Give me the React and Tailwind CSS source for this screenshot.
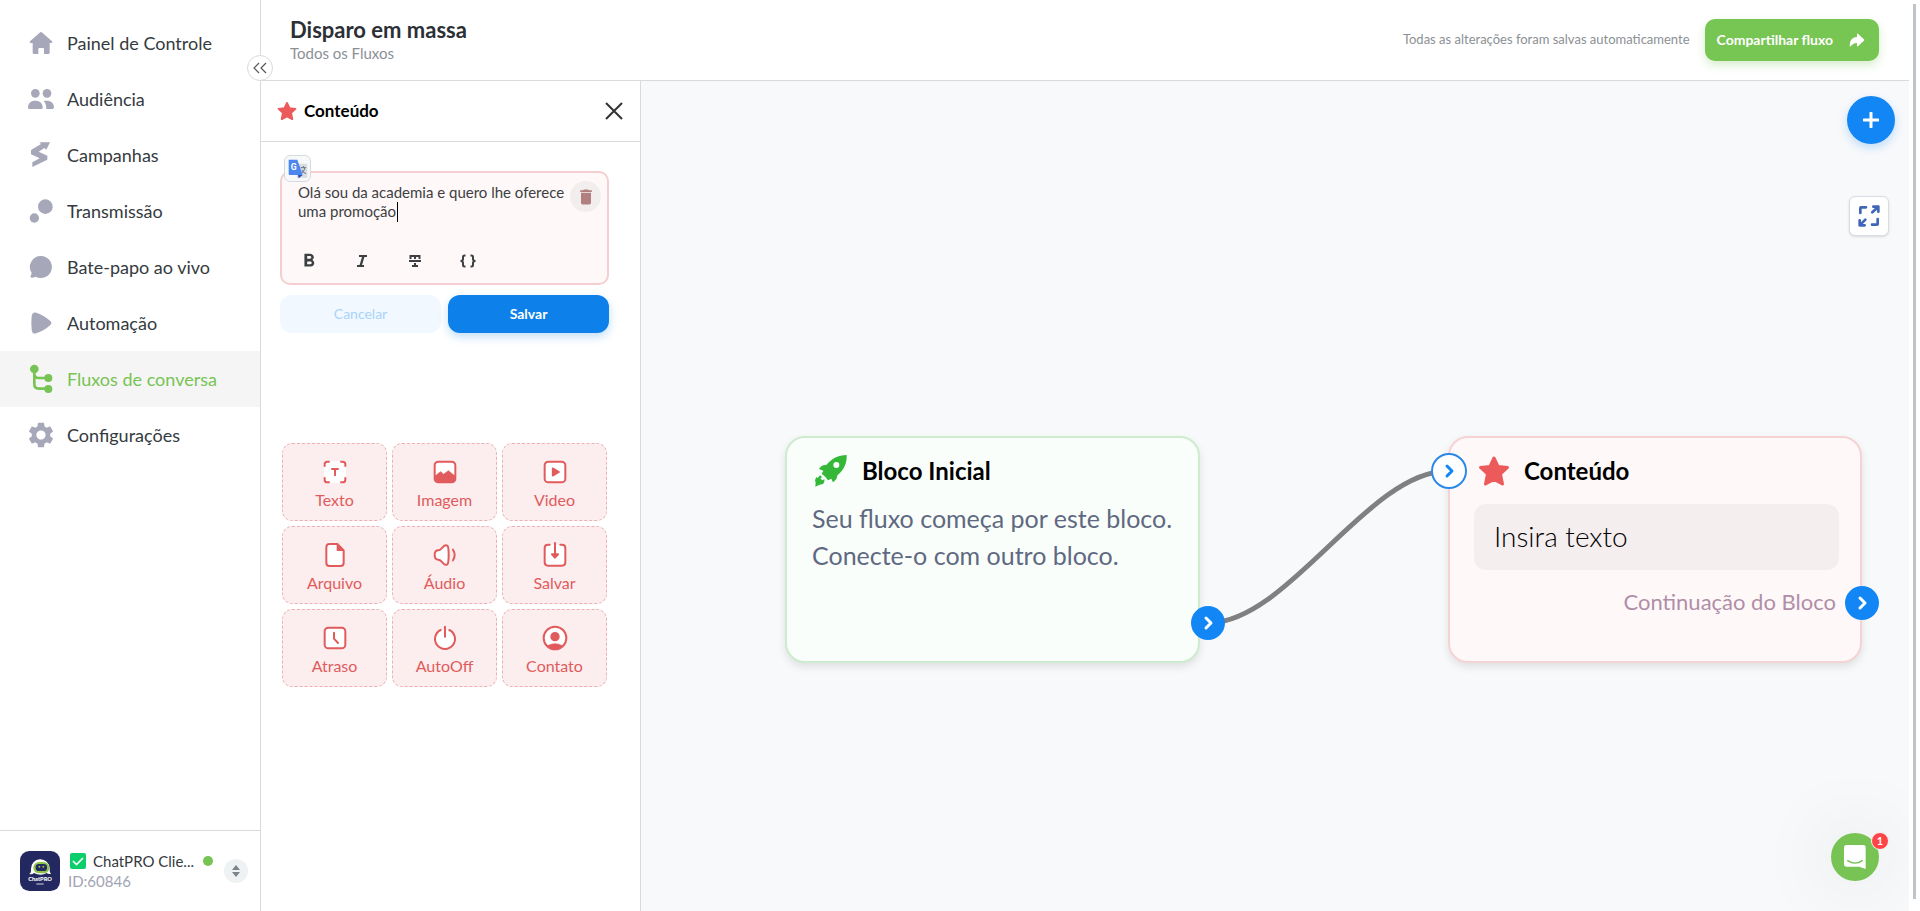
/**
 * Flow builder screen: side navigation, content editor panel and block canvas.
 */

import React, { useState } from 'react';
import { MdDelete, MdFormatBold, MdSettings } from 'react-icons/md';
import { IoArrowRedo } from 'react-icons/io5';

const NAV_ITEMS = [
    {
        label: 'Painel de Controle',
        icon: (
            <path d="M42 9Q44 9 46 11L75 37Q78 42 73 42H68V71Q68 75 64 75H51V60Q51 57 48 57H37Q34 57 34 60V75H21Q17 75 17 71V42H11Q6 42 9 37L38 11Q40 9 42 9Z" />
        ),
    },
    {
        label: 'Audiência',
        icon: (
            <>
                <circle cx="25" cy="25" r="13" />
                <circle cx="60" cy="25" r="13" />
                <path d="M3 68C3 54 12 47 25 47S47 54 47 68Q47 72 43 72H7Q3 72 3 68Z" />
                <path d="M50 48C68 44 81 52 81 67Q81 72 76 72H58Q58 56 50 48Z" />
            </>
        ),
    },
    { label: 'Campanhas', icon: <path d="M12 27L42 9L37 4H69L58 26L52 21L35 32L61 44V56L16 78V64L38 52L12 40Z" /> },
    {
        label: 'Transmissão',
        icon: (
            <>
                <circle cx="55" cy="29" r="22" />
                <circle cx="22" cy="63" r="14" />
            </>
        ),
    },
    {
        label: 'Bate-papo ao vivo',
        icon: <path d="M42 9A33 33 0 1 1 26 71Q20 74 13 74Q9 73 11 69L14 60A33 33 0 0 1 42 9Z" />,
    },
    {
        label: 'Automação',
        icon: <path d="M14 22Q16 7 28 11Q52 19 70 36Q76 42 70 48Q52 65 28 73Q16 77 14 62Q12 42 14 22Z" />,
    },
    {
        label: 'Fluxos de conversa',
        active: true,
        icon: (
            <>
                <circle cx="22" cy="12" r="13" />
                <circle cx="64" cy="39" r="12" />
                <circle cx="64" cy="72" r="12" />
                <path
                    d="M22 12V58Q22 71 35 71H62M22 26Q22 39 35 39H62"
                    fill="none"
                    stroke="currentColor"
                    strokeWidth="8"
                />
            </>
        ),
    },
    { label: 'Configurações', settings: true },
];

const Frame = () => <rect x="5" y="5" width="62" height="62" rx="11" fill="#fff" />;

const TILES = [
    {
        label: 'Texto',
        icon: (
            <>
                <rect x="4" y="4" width="64" height="64" rx="10" fill="#fff" stroke="none" />
                <path d="M5 18V13Q5 5 13 5H18M54 5H59Q67 5 67 13V18M67 54V59Q67 67 59 67H54M18 67H13Q5 67 5 59V54" />
                <path d="M27 27H45M36 27V46" />
            </>
        ),
    },
    {
        label: 'Imagem',
        icon: (
            <>
                <Frame />
                <path d="M6 48L23 35L32 43L46 32L66 48V58Q66 66 58 66H14Q6 66 6 58Z" fill="currentColor" strokeWidth="2" />
            </>
        ),
    },
    {
        label: 'Video',
        icon: (
            <>
                <Frame />
                <path d="M29 25L48 36L29 47Z" fill="currentColor" strokeWidth="5" />
            </>
        ),
    },
    {
        label: 'Arquivo',
        icon: (
            <>
                <path d="M20 3H43L62 22V59Q62 69 52 69H20Q10 69 10 59V13Q10 3 20 3Z" fill="#fff" />
                <path d="M43 4V22H61Z" fill="currentColor" strokeWidth="4" />
            </>
        ),
    },
    {
        label: 'Áudio',
        icon: (
            <>
                <path
                    d="M16 22Q21 22 26 16L33 9Q38 5 43 8Q47 11 47 36T43 64Q38 67 33 63L26 56Q21 50 16 50Q5 50 5 36T16 22Z"
                    fill="#fff"
                />
                <path d="M60 20Q70 36 60 52" />
            </>
        ),
    },
    {
        label: 'Salvar',
        icon: (
            <>
                <path d="M20 5H15Q5 5 5 15V58Q5 68 15 68H57Q67 68 67 58V15Q67 5 57 5H52" fill="#fff" />
                <path d="M36 0V40" />
                <path d="M27 34H45L36 44Z" fill="currentColor" />
            </>
        ),
    },
    {
        label: 'Atraso',
        icon: (
            <>
                <Frame />
                <path d="M33 20V38L45 51" />
            </>
        ),
    },
    {
        label: 'AutoOff',
        icon: (
            <>
                <path d="M23 12A30 30 0 1 0 49 12" fill="#fff" />
                <path d="M36 2V32" />
            </>
        ),
    },
    {
        label: 'Contato',
        icon: (
            <>
                <circle cx="36" cy="36" r="34" fill="#fff" />
                <circle cx="36" cy="32" r="11" fill="currentColor" />
                <path d="M14 59Q36 47 58 59Q36 80 14 59Z" fill="currentColor" strokeWidth="2" />
            </>
        ),
    },
];

const Star = ({ className }) => (
    <svg viewBox="0 0 32 32" className={className} fill="currentColor" stroke="currentColor" aria-hidden="true">
        <path
            d="M16 3L20 11.500L29.500 12.500L22.500 19L24.500 29L16 24.500L7.500 29L9.500 19L2.500 12.500L12 11.500Z"
            strokeWidth="3"
            strokeLinejoin="round"
        />
    </svg>
);

const Chevron = () => (
    <svg viewBox="0 0 16 16" className="size-4" fill="none" stroke="currentColor" strokeWidth="3" aria-hidden="true">
        <path d="M6 3L11 8L6 13" strokeLinecap="round" strokeLinejoin="round" />
    </svg>
);

const Rocket = () => (
    <svg viewBox="0 0 96 96" className="size-8" fill="#35b837" aria-hidden="true">
        <path
            fillRule="evenodd"
            d="M95 0C96 24 88 44 67 61C67 70 62 77 54 82L49 71L39 76C34 68 28 62 20 57L25 47L12 42C16 34 24 29 34 30C50 10 70 1 95 0ZM64 21A9 9 0 1 0 64 39A9 9 0 1 0 64 21Z"
        />
        <path d="M15 61L21 66L16 71L23 76L28 72Q30 82 24 87L14 89L1 95L2 83L0 76L4 66L8 69Z" />
    </svg>
);

const Sidebar = () => (
    <aside className="relative flex w-[261px] shrink-0 flex-col border-r border-[#d9dadd] bg-white">
        <nav className="flex-1 pt-[15px]">
            {NAV_ITEMS.map(({ label, icon, active, settings }) => (
                <a
                    key={label}
                    href="#"
                    className={`flex h-14 items-center gap-3 pl-[27px] text-lg ${
                        active ? 'bg-[#f5f5f5] text-[#77c353]' : 'text-[#343a40]'
                    }`}
                >
                    {settings ? (
                        <MdSettings className="size-7 scale-110 text-[#a6a8b9]" />
                    ) : (
                        <svg
                            viewBox="0 0 84 84"
                            className={`size-7 overflow-visible ${active ? '' : 'text-[#a6a8b9]'}`}
                            fill="currentColor"
                            aria-hidden="true"
                        >
                            {icon}
                        </svg>
                    )}
                    {label}
                </a>
            ))}
        </nav>

        <div className="flex h-[81px] items-center border-t border-[#d9dadd] pr-3 pl-5">
            <svg viewBox="0 0 120 120" className="size-10 shrink-0" aria-hidden="true">
                <rect width="120" height="120" rx="28" fill="#242861" />
                <path
                    d="M28 69Q34 66 33 54A28 28 0 0 1 89 52Q88 64 93 69Q84 70 80 66Q62 76 42 66Q36 71 28 69Z"
                    fill="#fff"
                />
                <rect x="40" y="33" width="48" height="34" rx="17" fill="#8cc34a" />
                <rect x="47" y="39" width="34" height="21" rx="10" fill="#242861" />
                <circle cx="58" cy="47" r="3" fill="#8cc34a" />
                <circle cx="70" cy="47" r="3" fill="#8cc34a" />
                <text x="60" y="91" fontSize="17" fontWeight="900" fontFamily="Lato, sans-serif" textAnchor="middle" fill="#fff">
                    ChatPRO
                </text>
                <rect x="49" y="97" width="22" height="4" fill="#a7a9c4" />
            </svg>
            <div className="ml-2 min-w-0 flex-1 text-[15px] leading-5">
                <div className="flex items-center text-[#343a40]">
                    <svg viewBox="0 0 16 16" className="mr-[7px] ml-[2px] size-4 shrink-0" aria-hidden="true">
                        <rect width="16" height="16" rx="2" fill="#0ccf6b" />
                        <path d="M3 8L6.500 11.500L13 5" fill="none" stroke="#fff" strokeWidth="1.600" />
                    </svg>
                    <span>ChatPRO Clie...</span>
                    <span className="ml-auto size-[10px] rounded-full bg-[#77c353]" />
                </div>
                <div className="text-[#a0a3b4]">ID:60846</div>
            </div>
            <button
                type="button"
                aria-label="Trocar conta"
                className="ml-[11px] flex size-6 items-center justify-center rounded-full bg-[#eff2f3] text-[#7c8389]"
            >
                <svg viewBox="0 0 10 12" className="h-3 w-[10px]" fill="currentColor" aria-hidden="true">
                    <path d="M5 0L9 5H1ZM5 12L1 7H9Z" />
                </svg>
            </button>
        </div>

        <button
            type="button"
            aria-label="Recolher menu"
            className="absolute top-[55px] -right-[13px] z-20 flex size-[26px] items-center justify-center rounded-full border border-[#d9dadd] bg-white text-[#555]"
        >
            <svg viewBox="0 0 14 12" className="h-3 w-[14px]" fill="none" stroke="currentColor" aria-hidden="true">
                <path d="M6 1L1 6L6 11M13 1L8 6L13 11" strokeWidth="1.200" />
            </svg>
        </button>
    </aside>
);

const Header = () => (
    <header className="flex h-[81px] shrink-0 items-center justify-between border-b border-[#d9dadd] bg-white pr-[30px] pl-[29px]">
        <div className="pt-[2px]">
            <h1 className="text-[22px] leading-6 font-bold text-[#2b3036]">Disparo em massa</h1>
            <p className="text-[15px] leading-[22px] text-[#8b9095]">Todos os Fluxos</p>
        </div>
        <div className="flex items-center gap-[15px]">
            <span className="text-[13px] text-[#8b9095]">Todas as alterações foram salvas automaticamente</span>
            <button
                type="button"
                className="flex h-[42px] items-center gap-[15px] rounded-[10px] bg-[#77c553] px-3 text-sm font-bold text-white shadow-[0_4px_10px_rgba(119,197,83,0.3)]"
            >
                Compartilhar fluxo
                <IoArrowRedo className="mr-[1px] size-[18px]" />
            </button>
        </div>
    </header>
);

const ContentPanel = () => {
    const [text, setText] = useState('Olá sou da academia e quero lhe oferece uma promoção');

    return (
        <section className="w-[380px] shrink-0 border-r border-[#d9dadd] bg-white">
            <div className="flex h-[61px] items-center border-b border-[#d9dadd] pr-[17px] pl-4">
                <Star className="size-5 text-[#ec5a5b]" />
                <h2 className="ml-[7px] flex-1 text-[17px] font-bold text-black">Conteúdo</h2>
                <button type="button" aria-label="Fechar" className="text-[#333]">
                    <svg viewBox="0 0 18 18" className="size-[18px]" fill="none" stroke="currentColor" aria-hidden="true">
                        <path d="M1 1L17 17M17 1L1 17" strokeWidth="2" />
                    </svg>
                </button>
            </div>

            <div className="pt-[29px] pr-[31px] pl-[19px]">
                <div className="relative rounded-[10px] border-2 border-[#f5cfcf] bg-[#fef9f8]">
                    <textarea
                        aria-label="Mensagem"
                        value={text}
                        onChange={(e) => setText(e.target.value)}
                        className="mt-[10px] ml-4 block h-[67px] w-[276px] resize-none overflow-hidden bg-transparent text-[15px] leading-[19px] text-[#3d4043] outline-none"
                    />
                    <span className="absolute top-[29px] left-[115px] h-5 w-px bg-black" />
                    <div className="flex h-[33px] gap-[31px] pl-4 text-[#3d4043]">
                        <button type="button" aria-label="Negrito" className="flex size-[22px] items-center justify-center">
                            <MdFormatBold className="size-6" />
                        </button>
                        <button type="button" aria-label="Itálico" className="flex size-[22px] items-center justify-center">
                            <svg viewBox="0 0 12 12" className="size-3" fill="none" stroke="currentColor" aria-hidden="true">
                                <path d="M3 1H11M1 11H8" strokeWidth="2" />
                                <path d="M7.500 1L4.500 11" strokeWidth="2.400" />
                            </svg>
                        </button>
                        <button type="button" aria-label="Tachado" className="flex size-[22px] items-center justify-center">
                            <svg viewBox="0 0 12 12" className="size-3" fill="none" stroke="currentColor" aria-hidden="true">
                                <path d="M1.500 4V1H10.500V4M6 1V4M6 8V11" strokeWidth="2" />
                                <path d="M0 6H12M3 11H9" strokeWidth="1.800" />
                            </svg>
                        </button>
                        <button type="button" aria-label="Variável" className="flex size-[22px] items-center justify-center">
                            <svg
                                viewBox="0 0 16 12"
                                className="h-3 w-4 overflow-visible"
                                fill="none"
                                stroke="currentColor"
                                aria-hidden="true"
                            >
                                <path
                                    d="M5.500 0.500H4.500Q3 0.500 3 2V4Q3 6 0.500 6Q3 6 3 8V10Q3 11.500 4.500 11.500H5.500M10.500 0.500H11.500Q13 0.500 13 2V4Q13 6 15.500 6Q13 6 13 8V10Q13 11.500 11.500 11.500H10.500"
                                    strokeWidth="2"
                                />
                            </svg>
                        </button>
                    </div>

                    <button
                        type="button"
                        aria-label="Excluir"
                        className="absolute top-2 right-[6px] flex size-[31px] items-center justify-center rounded-full bg-[#f3eeee] text-[#b27f80]"
                    >
                        <MdDelete className="size-5" />
                    </button>
                    <div className="absolute -top-[18px] left-[2px] flex size-[27px] items-center justify-center rounded-md border border-[#d6d9dd] bg-[#f7f8fa]">
                        <svg viewBox="0 0 60 60" className="size-5" aria-hidden="true">
                            <rect x="26" y="14" width="32" height="42" rx="3" fill="#dadce0" />
                            <path
                                d="M38 26H54M46 21V26M51 26Q48 38 40 44M41 33Q46 42 54 44"
                                fill="none"
                                stroke="#607988"
                                strokeWidth="3"
                            />
                            <path d="M30 48H44L32 58Z" fill="#2a50b8" />
                            <path d="M2 2H28L44 48H5Q2 48 2 45Z" fill="#4b87ef" />
                            <text x="8" y="34" fontSize="26" fontWeight="700" fontFamily="Roboto, sans-serif" fill="#fff">
                                G
                            </text>
                        </svg>
                    </div>
                </div>

                <div className="mt-[10px] grid grid-cols-2 gap-[7px] text-sm">
                    <button type="button" className="h-[38px] rounded-xl bg-[#f1f8ff] text-[#a9d3f8]">
                        Cancelar
                    </button>
                    <button
                        type="button"
                        className="h-[38px] rounded-xl bg-[#0d80e9] font-bold text-white shadow-[0_4px_10px_rgba(13,128,233,0.25)]"
                    >
                        Salvar
                    </button>
                </div>
            </div>

            <div className="mt-[110px] grid grid-cols-3 gap-[5px] pr-[33px] pl-[21px]">
                {TILES.map(({ label, icon }) => (
                    <button
                        key={label}
                        type="button"
                        className="flex h-[78px] flex-col items-center gap-[6px] rounded-[10px] border border-dashed border-[#ebb0b3] bg-[#fceeee] pt-4 text-base leading-5 text-[#e15b5d]"
                    >
                        <svg
                            viewBox="0 0 72 72"
                            className="size-6 overflow-visible"
                            fill="none"
                            stroke="currentColor"
                            strokeWidth="6"
                            strokeLinecap="round"
                            strokeLinejoin="round"
                            aria-hidden="true"
                        >
                            {icon}
                        </svg>
                        {label}
                    </button>
                ))}
            </div>
        </section>
    );
};

const Canvas = () => (
    <main className="relative min-w-0 flex-1 overflow-hidden bg-[#f8f9fb]">
        <svg className="absolute top-[380px] left-[570px] h-[170px] w-[240px]" viewBox="0 0 240 170" fill="none" aria-hidden="true">
            <path d="M-3 162C77 162 157 10 237 10" stroke="#808080" strokeWidth="5" />
        </svg>

        <article className="absolute top-[355px] left-[144px] h-[227px] w-[415px] rounded-[20px] border-2 border-[#cdeccd] bg-[#f9fefa] shadow-[0_4px_8px_rgba(0,0,0,0.1)]">
            <div className="flex items-center gap-[15px] pt-[15px] pl-7">
                <Rocket />
                <h3 className="text-2xl leading-9 font-bold text-black">Bloco Inicial</h3>
            </div>
            <p className="mt-[11px] pl-[25px] text-[25px] leading-[37px] text-[#5f6981]">
                Seu fluxo começa por este bloco.
                <br />
                Conecte-o com outro bloco.
            </p>
            <button
                type="button"
                aria-label="Saída do bloco inicial"
                className="absolute top-[168px] -right-[27px] flex size-[34px] items-center justify-center rounded-full bg-[#1286f5] text-white"
            >
                <Chevron />
            </button>
        </article>

        <article className="absolute top-[355px] left-[807px] h-[227px] w-[414px] rounded-[20px] border-2 border-[#f5d3d4] bg-[#fef9f8] shadow-[0_4px_8px_rgba(0,0,0,0.1)]">
            <div className="flex items-center gap-[14px] pt-[15px] pl-7">
                <Star className="size-8 text-[#ec5a5b]" />
                <h3 className="text-2xl leading-9 font-bold text-black">Conteúdo</h3>
            </div>
            <div className="mt-[15px] mr-[21px] ml-6 flex h-[66px] items-center rounded-xl bg-[#f5eeef] px-5 pb-[2px] text-[28px] leading-9 font-light text-black">
                Insira texto
            </div>
            <p className="mt-[14px] pr-6 text-right text-[22px] leading-9 text-[#b08ea8]">Continuação do Bloco</p>
            <button
                type="button"
                aria-label="Entrada do conteúdo"
                className="absolute top-[15px] -left-[19px] flex size-9 items-center justify-center rounded-full border-2 border-[#2b8ae8] bg-white text-[#1286f5]"
            >
                <Chevron />
            </button>
            <button
                type="button"
                aria-label="Continuação do bloco"
                className="absolute top-[148px] -right-[19px] flex size-[34px] items-center justify-center rounded-full bg-[#1286f5] text-white"
            >
                <Chevron />
            </button>
        </article>

        <button
            type="button"
            aria-label="Adicionar bloco"
            className="absolute top-[15px] right-[14px] flex size-12 items-center justify-center rounded-full bg-[#1286f5] text-white shadow-[0_4px_10px_rgba(18,134,245,0.25)]"
        >
            <svg viewBox="0 0 16 16" className="size-4" fill="none" stroke="currentColor" aria-hidden="true">
                <path d="M8 1V15M1 8H15" strokeWidth="3" strokeLinecap="round" />
            </svg>
        </button>
        <button
            type="button"
            aria-label="Tela cheia"
            className="absolute top-[115px] right-5 flex size-10 items-center justify-center rounded-md border border-[#d9dce2] bg-white text-[#4067b7] shadow-sm"
        >
            <svg
                viewBox="0 0 66 66"
                className="size-[22px]"
                fill="none"
                stroke="currentColor"
                strokeWidth="8"
                strokeLinecap="round"
                strokeLinejoin="round"
                aria-hidden="true"
            >
                <path d="M7 24V9Q7 7 9 7H24M59 42V57Q59 59 57 59H42" />
                <path d="M46 5H61V20M61 5L43 22M20 61H5V46M5 61L22 44" />
            </svg>
        </button>

        <div className="absolute right-[30px] bottom-[30px]">
            <button
                type="button"
                aria-label="Abrir chat"
                className="flex size-12 items-center justify-center rounded-full bg-[#77c353] shadow-[0_0_80px_rgba(0,0,0,0.14)]"
            >
                <svg viewBox="0 0 66 72" className="h-6 w-[22px]" aria-hidden="true">
                    <path d="M8 0H58Q65 0 65 8V72L46 65H8Q0 65 0 58V8Q0 0 8 0Z" fill="#fff" />
                    <path d="M11 47Q33 62 55 47" fill="none" stroke="#77c353" strokeWidth="4" strokeLinecap="round" />
                </svg>
            </button>
            <span className="absolute -top-[1px] -right-[10px] flex size-[18px] items-center justify-center rounded-full border border-[#f6f7f9] bg-[#fd4548] text-[11px] font-bold text-white">
                1
            </span>
        </div>
    </main>
);

const App = () => (
    <div className="flex h-screen overflow-hidden bg-white font-[Lato,sans-serif]">
        <Sidebar />
        <div className="flex min-w-0 flex-1 flex-col">
            <Header />
            <div className="flex min-h-0 flex-1">
                <ContentPanel />
                <Canvas />
            </div>
        </div>
        <div className="w-[11px] shrink-0 px-1 pt-1 pb-3">
            <div className="h-full w-[3px] bg-[#bfc4ca]" />
        </div>
    </div>
);

export default App;
